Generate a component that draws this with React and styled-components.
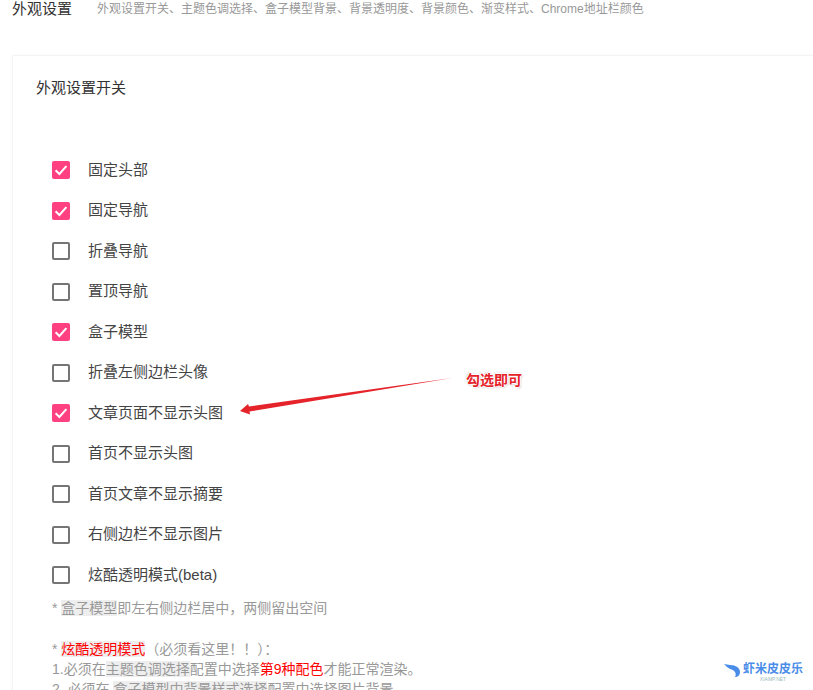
import React from 'react';
import styled, { createGlobalStyle } from 'styled-components';

const GlobalStyle = createGlobalStyle`
  html, body {
    margin: 0;
    padding: 0;
    background: #fff;
    overflow: hidden;
  }
  body {
    font-family: "Liberation Sans", "Noto Sans CJK SC", sans-serif;
  }
`;

const Page = styled.div`
  position: relative;
  width: 813px;
  height: 690px;
  overflow: hidden;
  padding-left: 12px;
  box-sizing: border-box;
`;

const Header = styled.header`
  display: flex;
  align-items: center;
  height: 15px;
  gap: 25px;
`;

const PageTitle = styled.h1`
  margin: 0;
  font-size: 15px;
  font-weight: 400;
  color: #333;
`;

const PageDesc = styled.span`
  font-size: 12px;
  color: #999;
`;

const Card = styled.section`
  margin-top: 40px;
  width: 840px;
  height: 700px;
  box-sizing: border-box;
  padding: 22px 23px;
  border: 1px solid #f4f4f4;
  box-shadow: 0 0 3px rgba(0, 0, 0, 0.03);
`;

const CardTitle = styled.h2`
  margin: 0;
  font-size: 15px;
  line-height: 20px;
  font-weight: 400;
  color: #333;
`;

const OptionList = styled.ul`
  list-style: none;
  margin: 60px 0 0;
  padding: 0 0 0 16px;
  display: flex;
  flex-direction: column;
  gap: 20.5px;
`;

const Option = styled.li`
  display: flex;
  align-items: center;
  height: 20px;
  gap: 18px;
  font-size: 15px;
  color: #444;
`;

const Box = styled.span`
  display: flex;
  align-items: center;
  justify-content: center;
  width: 18px;
  height: 18px;
  margin-top: 4px;
  box-sizing: border-box;
  border-radius: 2px;
  background: ${({ $on }) => ($on ? '#ff4081' : '#fff')};
  border: ${({ $on }) => ($on ? 'none' : '2px solid #757575')};
`;

const Notes = styled.div`
  margin: 15px 0 0 16px;
  font-size: 14px;
  line-height: 20px;
  color: #999;
`;

const NoteGap = styled.p`
  margin: 0 0 21px;
`;

const NoteBlock = styled.p`
  margin: 0;
`;

const Mark = styled.span`
  background: #eee;
`;

const Red = styled.span`
  color: #f00;
  background: ${({ $bg }) => ($bg ? '#eee' : 'transparent')};
`;

const Arrow = styled.svg`
  position: absolute;
  left: 236px;
  top: 372px;
`;

const Callout = styled.span`
  position: absolute;
  left: 466px;
  top: 371px;
  font-size: 14px;
  line-height: 18px;
  font-weight: 700;
  color: #e5232a;
  text-shadow: 1px 0 0 #fff, -1px 0 0 #fff, 0 1px 0 #fff, 0 -1px 0 #fff, 1px 1px 2px #bbb, -1px -1px 2px #ccc;
`;

const Watermark = styled.div`
  position: absolute;
  left: 723px;
  top: 662px;
  display: flex;
  gap: 1px;
  color: #4a8de8;
`;

const WatermarkText = styled.div`
  display: flex;
  flex-direction: column;
  align-items: center;
`;

const WatermarkName = styled.span`
  font-size: 12px;
  line-height: 14px;
  font-weight: 700;
`;

const WatermarkSub = styled.span`
  font-size: 5px;
  line-height: 6px;
  color: #9bb;
`;

const Check = () => (
  <svg width="14" height="14" viewBox="0 0 14 14" fill="none">
    <path d="M1.6 7.2 L5.4 11 L12.4 3.2" stroke="#fff" strokeWidth="2" />
  </svg>
);

const options = [
  ['固定头部', true],
  ['固定导航', true],
  ['折叠导航', false],
  ['置顶导航', false],
  ['盒子模型', true],
  ['折叠左侧边栏头像', false],
  ['文章页面不显示头图', true],
  ['首页不显示头图', false],
  ['首页文章不显示摘要', false],
  ['右侧边栏不显示图片', false],
  ['炫酷透明模式(beta)', false],
];

export default function App() {
  return (
    <Page>
      <GlobalStyle />
      <Header>
        <PageTitle>外观设置</PageTitle>
        <PageDesc>外观设置开关、主题色调选择、盒子模型背景、背景透明度、背景颜色、渐变样式、Chrome地址栏颜色</PageDesc>
      </Header>
      <Card>
        <CardTitle>外观设置开关</CardTitle>
        <OptionList>
          {options.map(([label, on]) => (
            <Option key={label}>
              <Box $on={on}>{on && <Check />}</Box>
              {label}
            </Option>
          ))}
        </OptionList>
        <Notes>
          <NoteGap>* <Mark>盒子模型</Mark>即左右侧边栏居中，两侧留出空间</NoteGap>
          <NoteBlock>* <Red $bg>炫酷透明模式</Red>（必须看这里！！）：</NoteBlock>
          <NoteBlock>1.必须在<Mark>主题色调选择</Mark>配置中选择<Red>第9种配色</Red>才能正常渲染。</NoteBlock>
          <NoteBlock>2. 必须在 <Mark>盒子模型中背景样式选择</Mark>配置中选择图片背景</NoteBlock>
        </Notes>
      </Card>
      <Arrow width="220" height="50" viewBox="0 0 220 50">
        <path d="M216 6 L13 34.5 L12 32 L4 39 L14 42.5 L13.5 39.5 Z" fill="#e5232a" />
      </Arrow>
      <Callout>勾选即可</Callout>
      <Watermark>
        <svg width="19" height="16" viewBox="0 0 19 16" fill="none">
          <path d="M1 2 L7 3 C13 3 17 6 17 10 C17 13 15 15 12 15 C14 12 12 8 7 7 C5 6 3 4 1 2 Z" fill="#4a8de8" />
        </svg>
        <WatermarkText>
          <WatermarkName>虾米皮皮乐</WatermarkName>
          <WatermarkSub>XIAMP.NET</WatermarkSub>
        </WatermarkText>
      </Watermark>
    </Page>
  );
}
